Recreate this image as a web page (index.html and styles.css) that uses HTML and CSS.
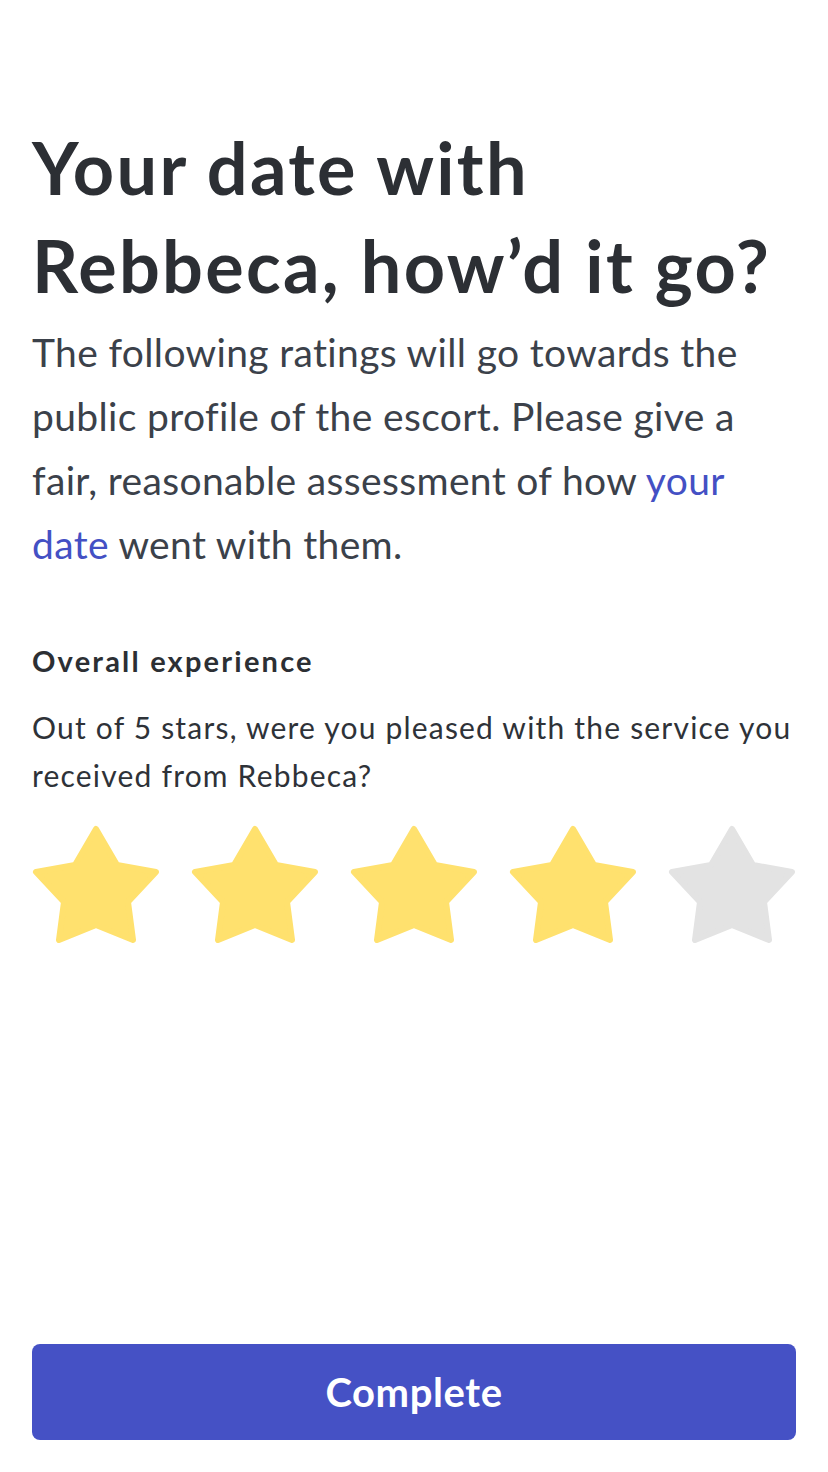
FILE: index.html
```html
<!DOCTYPE html>
<html lang="en">
<head>
<meta charset="utf-8">
<title>Rate your date</title>
<link rel="stylesheet" href="styles.css">
</head>
<body>
<main class="page">
  <h1 class="title">Your date with Rebbeca, how’d it go?</h1>
  <p class="intro">The following ratings will go towards the public profile of the escort. Please give a fair, reasonable assessment of how <a class="link" href="#">your date</a> went with them.</p>
  <section class="rating">
    <h2 class="rating-title">Overall experience</h2>
    <p class="rating-desc">Out of 5 stars, were you pleased with the service you received from Rebbeca?</p>
    <div class="stars">
      <svg class="star on" viewBox="0 0 128 120"><polygon points="64,4 85,40 124,47 96,77 101,115 64,100 27,115 32,77 4,47 43,40"/></svg>
      <svg class="star on" viewBox="0 0 128 120"><polygon points="64,4 85,40 124,47 96,77 101,115 64,100 27,115 32,77 4,47 43,40"/></svg>
      <svg class="star on" viewBox="0 0 128 120"><polygon points="64,4 85,40 124,47 96,77 101,115 64,100 27,115 32,77 4,47 43,40"/></svg>
      <svg class="star on" viewBox="0 0 128 120"><polygon points="64,4 85,40 124,47 96,77 101,115 64,100 27,115 32,77 4,47 43,40"/></svg>
      <svg class="star off" viewBox="0 0 128 120"><polygon points="64,4 85,40 124,47 96,77 101,115 64,100 27,115 32,77 4,47 43,40"/></svg>
    </div>
  </section>
  <button class="complete" type="button">Complete</button>
</main>
</body>
</html>
```
FILE: styles.css
```css
* { box-sizing: border-box; }
html, body { margin: 0; padding: 0; background: #ffffff; }
body { font-family: Lato, "Liberation Sans", sans-serif; }
.page {
  display: flex;
  flex-direction: column;
  min-height: 1472px;
  padding: 118px 32px 32px;
}
.title {
  margin: 0;
  font-size: 72px;
  line-height: 98px;
  font-weight: 700;
  color: #2c2f34;
  letter-spacing: 2.3px;
}
.intro {
  margin: 6px 0 0;
  font-size: 39px;
  line-height: 64px;
  letter-spacing: 0.35px;
  color: #3b414a;
}
.link { color: #4450c4; text-decoration: none; }
.rating { margin-top: 65px; }
.rating-title {
  margin: 0;
  font-size: 29px;
  line-height: 40px;
  font-weight: 700;
  letter-spacing: 2.2px;
  color: #2c2f34;
}
.rating-desc {
  margin: 22px 0 0;
  font-size: 30px;
  line-height: 48px;
  letter-spacing: 1.2px;
  color: #2e3238;
}
.stars {
  display: flex;
  justify-content: space-between;
  margin-top: 26px;
}
.star { width: 128px; height: 120px; display: block; }
.star polygon { stroke-width: 6; stroke-linejoin: round; }
.star.on polygon { fill: #ffe16e; stroke: #ffe16e; }
.star.off polygon { fill: #e3e3e3; stroke: #e3e3e3; }
.complete {
  margin-top: auto;
  height: 96px;
  width: 100%;
  border: 0;
  border-radius: 8px;
  background: #4551c5;
  color: #ffffff;
  font-family: Lato, "Liberation Sans", sans-serif;
  font-size: 40px;
  letter-spacing: 0.6px;
  font-weight: 700;
}
```
